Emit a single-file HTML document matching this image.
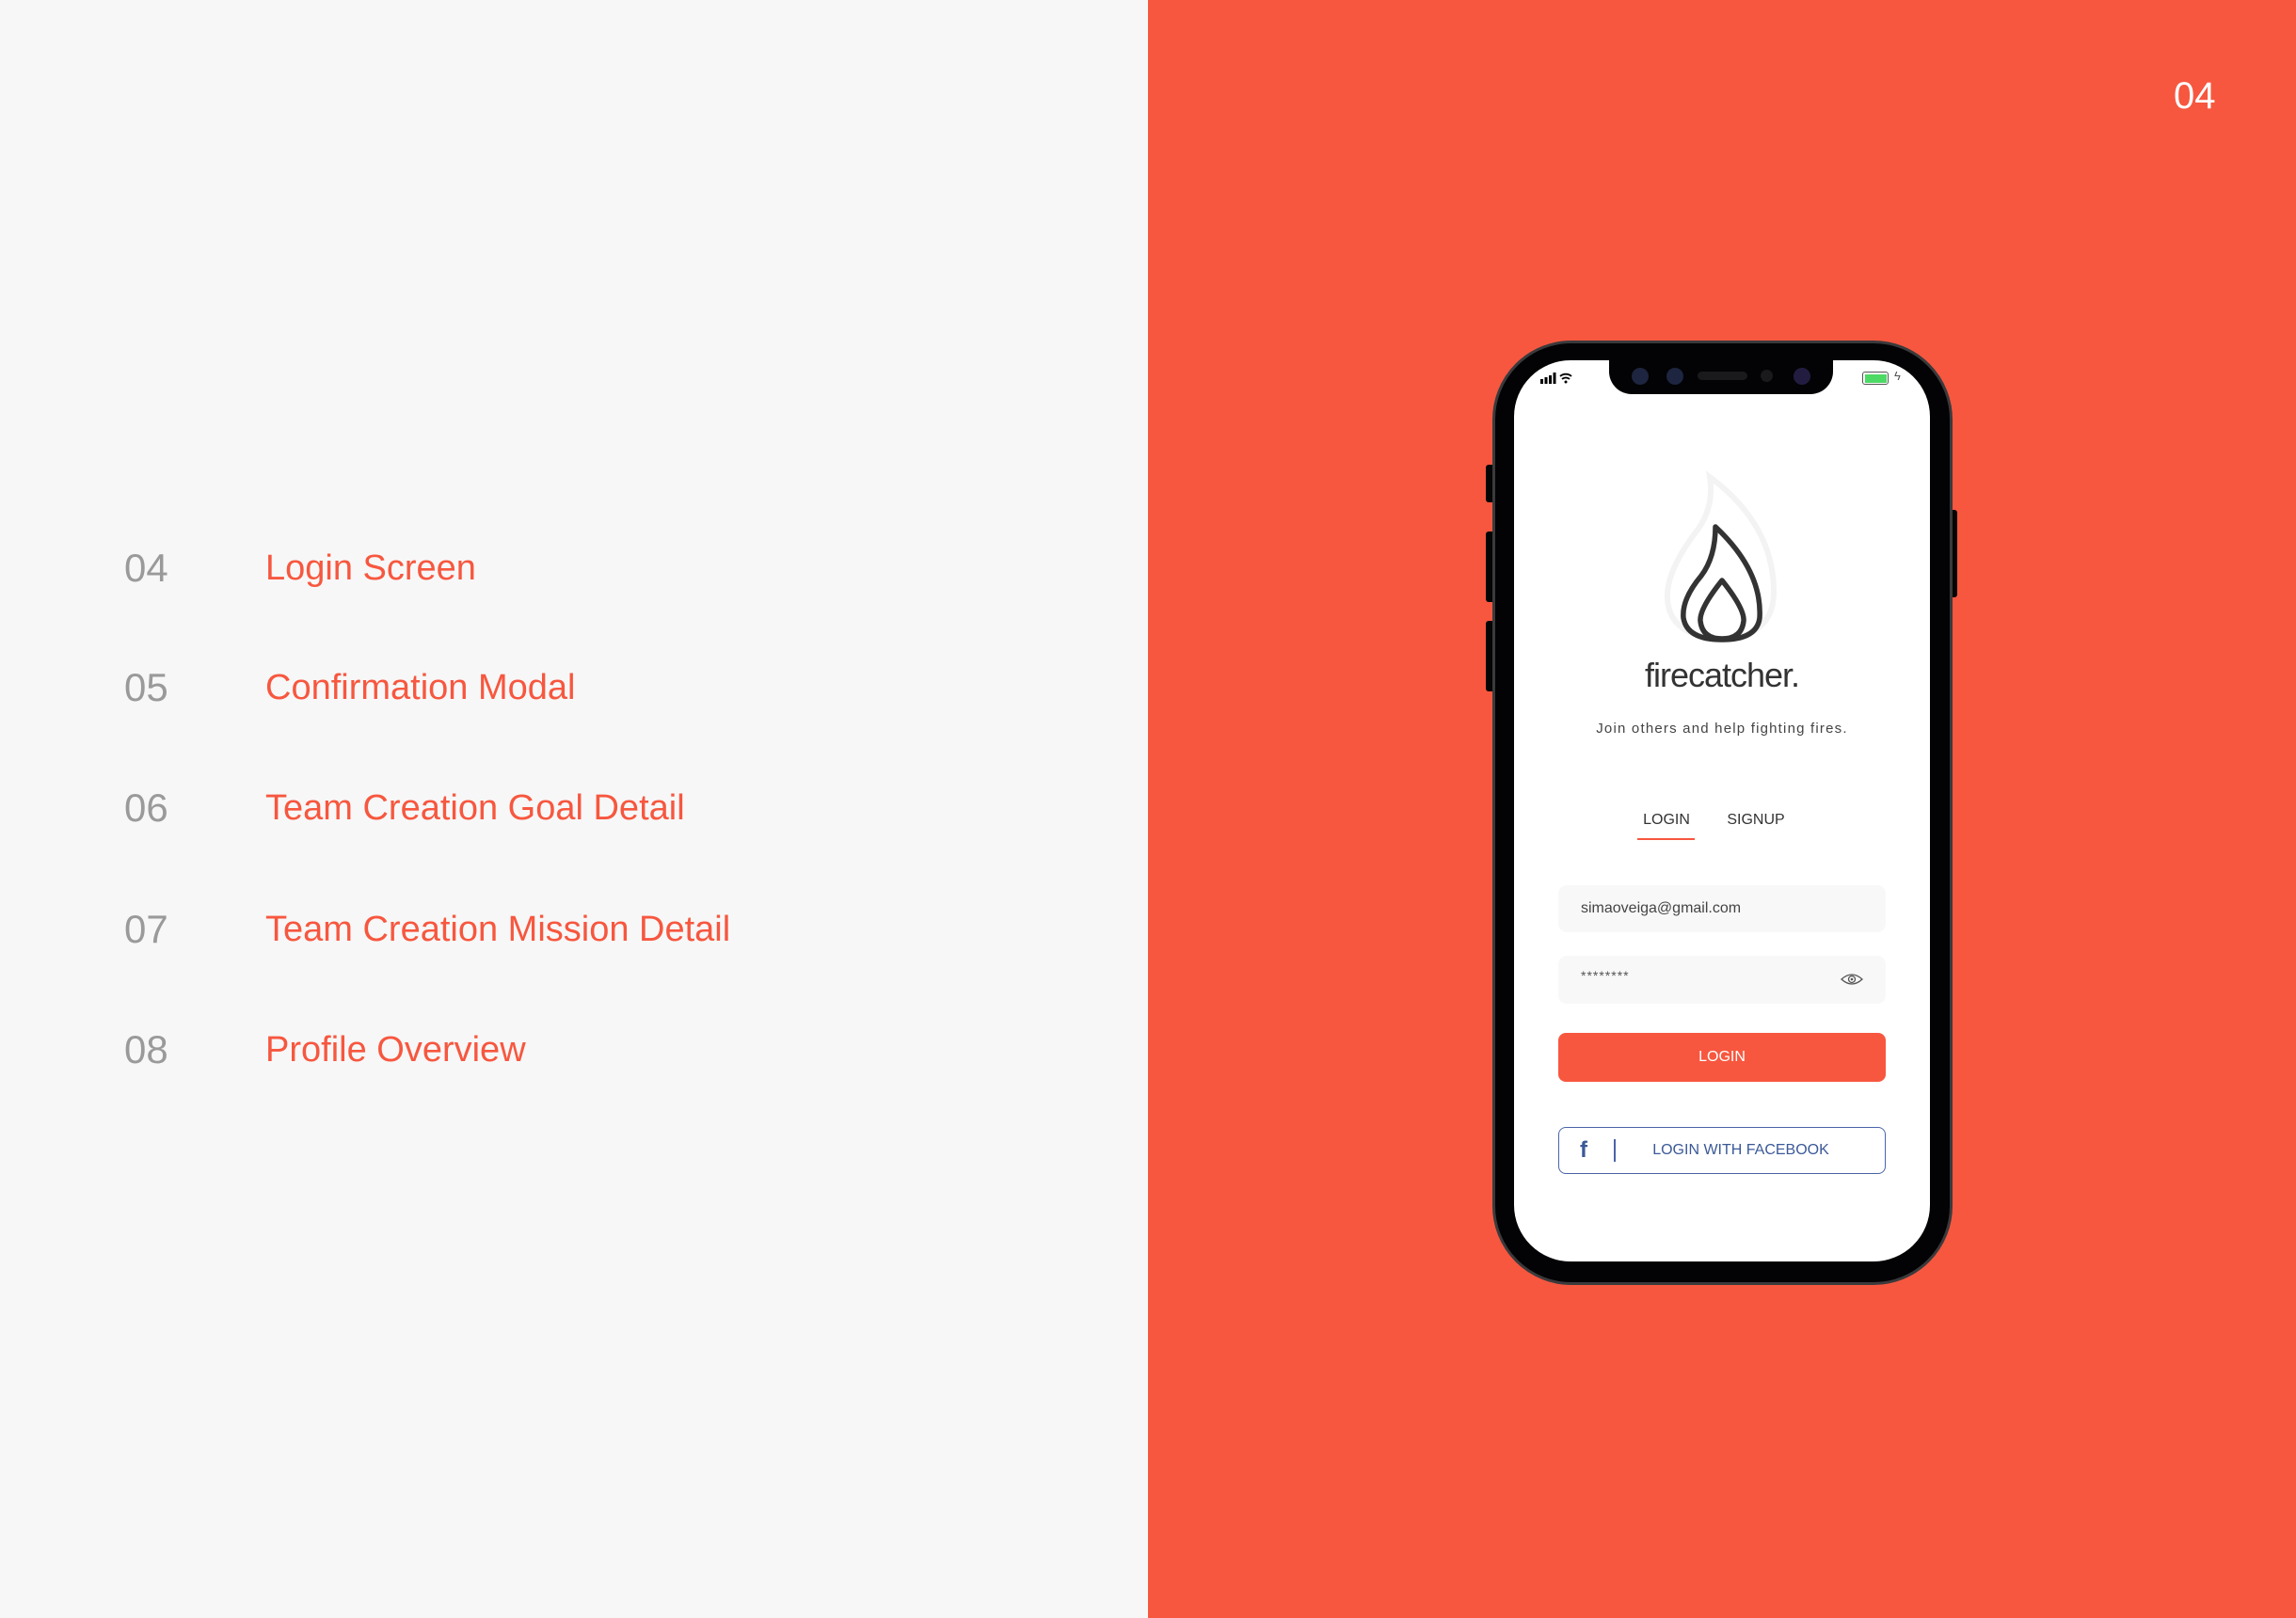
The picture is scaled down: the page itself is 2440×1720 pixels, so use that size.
<!DOCTYPE html>
<html><head><meta charset="utf-8"><style>
*{margin:0;padding:0;box-sizing:border-box}
body{width:2440px;height:1720px;position:relative;overflow:hidden;background:#f7f7f7;font-family:"Liberation Sans",sans-serif}
.right{position:absolute;left:1220px;top:0;width:1220px;height:1720px;background:#f7573f}
.pg{position:absolute;left:2310px;top:80px;color:#fff;font-size:40px}
.row{position:absolute;left:132px;line-height:46px}
.row .n{color:#9a9a9a;position:absolute;left:0;width:120px;font-size:42px}
.row .t{color:#f7573f;position:absolute;left:150px;white-space:nowrap;font-size:38px}
.abs{position:absolute}
</style></head><body>
<div class="right"></div>
<div class="pg">04</div>
<div class="row" style="top:581px"><span class="n">04</span><span class="t">Login Screen</span></div>
<div class="row" style="top:708px"><span class="n">05</span><span class="t">Confirmation Modal</span></div>
<div class="row" style="top:836px"><span class="n">06</span><span class="t">Team Creation Goal Detail</span></div>
<div class="row" style="top:965px"><span class="n">07</span><span class="t">Team Creation Mission Detail</span></div>
<div class="row" style="top:1093px"><span class="n">08</span><span class="t">Profile Overview</span></div>

<div class="abs" style="left:1579px;top:494px;width:10px;height:40px;background:#050505;border-radius:3px"></div>
<div class="abs" style="left:1579px;top:565px;width:10px;height:75px;background:#050505;border-radius:3px"></div>
<div class="abs" style="left:1579px;top:660px;width:10px;height:75px;background:#050505;border-radius:3px"></div>
<div class="abs" style="left:2070px;top:542px;width:10px;height:93px;background:#050505;border-radius:3px"></div>
<div class="abs" style="left:1586px;top:362px;width:489px;height:1004px;background:#030305;border-radius:84px;border:3px solid #3a3a3c"></div>
<div class="abs" style="left:1609px;top:383px;width:442px;height:958px;background:#fff;border-radius:60px"></div>
<div class="abs" style="left:1710px;top:376px;width:238px;height:43px;background:#030305;border-radius:0 0 24px 24px"></div>
<div class="abs" style="left:1734px;top:391px;width:18px;height:18px;border-radius:50%;background:#1d2540"></div>
<div class="abs" style="left:1771px;top:391px;width:18px;height:18px;border-radius:50%;background:#1d2540"></div>
<div class="abs" style="left:1804px;top:395px;width:53px;height:9px;border-radius:5px;background:#1a1a1c"></div>
<div class="abs" style="left:1871px;top:393px;width:13px;height:13px;border-radius:50%;background:#1a1a1c"></div>
<div class="abs" style="left:1906px;top:391px;width:18px;height:18px;border-radius:50%;background:#221d40"></div>
<svg class="abs" style="left:1637px;top:395px" width="36" height="14"><rect x="0" y="8" width="3" height="5" fill="#000"/><rect x="4.5" y="6" width="3" height="7" fill="#000"/><rect x="9" y="4" width="3" height="9" fill="#000"/><rect x="13.5" y="1" width="3" height="12" fill="#000"/><path d="M21 5a9 9 0 0 1 12 0M23 8a6 6 0 0 1 8 0" stroke="#000" stroke-width="1.8" fill="none"/><circle cx="27" cy="11" r="1.5" fill="#000"/></svg>
<div class="abs" style="left:1979px;top:395px;width:28px;height:14px;border:1.5px solid #555;border-radius:3px;padding:1.5px"><div style="width:100%;height:100%;background:#4cd964"></div></div>
<div class="abs" style="left:2013px;top:392px;font-size:13px;color:#555">ϟ</div>
<svg class="abs" style="left:1760px;top:497px" width="140" height="195" viewBox="0 0 140 195">
<path d="M57 10 Q62 40 45 65 Q10 110 12 140 Q15 180 70 182 Q126 180 125 130 Q124 60 57 10Z" fill="none" stroke="#f3f3f3" stroke-width="6"/>
<path d="M63 63 Q63 95 48 115 Q27 140 29 160 Q33 183 70 183 Q107 183 110 160 Q113 110 63 63Z" fill="none" stroke="#333" stroke-width="5.5" stroke-linejoin="round"/>
<path d="M70 120 Q46 150 47 163 Q49 182 70 182 Q91 182 93 163 Q94 150 70 120Z" fill="none" stroke="#333" stroke-width="5.5" stroke-linejoin="round"/>
</svg>
<div class="abs" style="left:1609px;width:442px;top:697px;text-align:center;font-size:36px;color:#333;letter-spacing:-1px">firecatcher.</div>
<div class="abs" style="left:1609px;width:442px;top:766px;text-align:center;font-size:15px;color:#444;letter-spacing:1.2px">Join others and help fighting fires.</div>
<div class="abs" style="left:1741px;top:863px;width:60px;text-align:center;font-size:16px;color:#333">LOGIN</div>
<div class="abs" style="left:1740px;top:891px;width:61px;height:2px;background:#f7573f"></div>
<div class="abs" style="left:1830px;top:863px;width:72px;text-align:center;font-size:16px;color:#333">SIGNUP</div>
<div class="abs" style="left:1656px;top:941px;width:348px;height:50px;background:#f8f8f8;border-radius:9px;padding:16px 0 0 24px;font-size:16px;color:#444">simaoveiga@gmail.com</div>
<div class="abs" style="left:1656px;top:1016px;width:348px;height:51px;background:#f8f8f8;border-radius:9px;padding:13px 0 0 24px;font-size:14px;color:#555;letter-spacing:1px">********</div>
<svg class="abs" style="left:1956px;top:1034px" width="24" height="14"><path d="M1 7Q12 -3 23 7Q12 17 1 7Z" fill="none" stroke="#555" stroke-width="1.3"/><circle cx="12" cy="7" r="3.5" fill="none" stroke="#555" stroke-width="1.3"/><circle cx="12" cy="7" r="1.3" fill="#555"/></svg>
<div class="abs" style="left:1656px;top:1098px;width:348px;height:52px;background:#f7573f;border-radius:8px;text-align:center;line-height:52px;font-size:16px;color:#fff">LOGIN</div>
<div class="abs" style="left:1656px;top:1198px;width:348px;height:50px;border:1.5px solid #4a64a8;border-radius:8px"></div>
<div class="abs" style="left:1679px;top:1209px;font-size:24px;font-weight:bold;color:#3b5998">f</div>
<div class="abs" style="left:1715px;top:1211px;width:2px;height:24px;background:#4a64a8"></div>
<div class="abs" style="left:1730px;top:1213px;width:240px;text-align:center;font-size:16px;color:#3b5998;line-height:20px">LOGIN WITH FACEBOOK</div>
</body></html>
